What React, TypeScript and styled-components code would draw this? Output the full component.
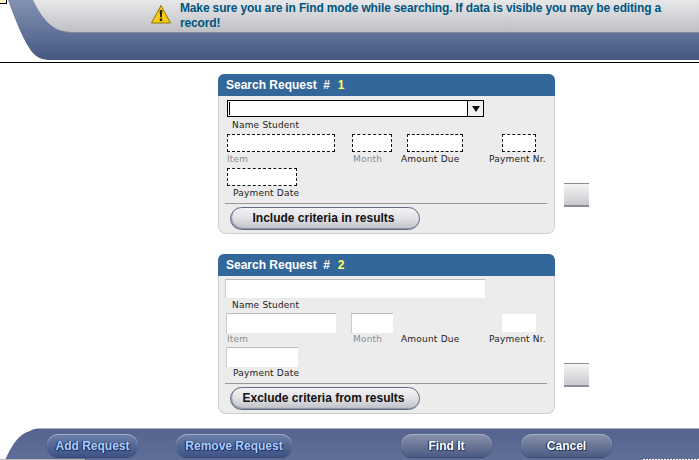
import React from "react";
import styled, { createGlobalStyle } from "styled-components";

const Global = createGlobalStyle`
  html, body { margin: 0; padding: 0; background: #fff; overflow: hidden; }
  body { width: 699px; height: 460px; font-family: "DejaVu Sans", Verdana, sans-serif; }
  * { box-sizing: border-box; }
`;
const Page = styled.div`
  position: relative; width: 699px; height: 460px; display: flex; flex-direction: column; overflow: hidden;
`;
const Header = styled.header`
  position: relative; height: 63px; border-bottom: 1px solid #000; flex: none;
`;
const Chrome = styled.svg`
  position: absolute; left: 0; top: 0; display: block;
`;
const Notice = styled.div`
  position: relative; display: flex; gap: 9px; padding: 1px 20px 0 151px; align-items: flex-start;
`;
const Warn = styled.svg`
  flex: none; margin-top: 3px;
`;
const NoticeText = styled.p`
  margin: 0; font: bold 12px/15px "Liberation Sans", sans-serif; color: #00567f; width: 490px; letter-spacing: -0.15px;
`;
const Flag = styled.div`
  position: absolute; left: 0; top: 0; width: 7px; height: 4px; background: #fff9c8;
  border: 1px solid #000; border-top: 0; border-left: 0;
`;
const Main = styled.main`
  flex: 1; padding: 11px 0 0 218px; display: flex; flex-direction: column; gap: 20px;
`;
const Row = styled.div`
  display: flex; align-items: flex-end; gap: 9px;
`;
const Card = styled.section`
  width: 337px; height: 160px; display: flex; flex-direction: column;
`;
const CardHead = styled.h2`
  margin: 0; height: 22px; background: #336699; border-radius: 6px 6px 0 0; color: #fff; padding: 3px 0 0 8px;
  font: bold 12px/16px "Liberation Sans", sans-serif; white-space: pre; flex: none;
`;
const Num = styled.span`
  color: #ffff66; margin-left: 1px;
`;
const CardBody = styled.div`
  flex: 1; background: #ececec; border: 1px solid #cfcfcf; border-top: 0; border-radius: 0 0 8px 8px;
  padding: 4px 7px 0 6px; display: flex; flex-direction: column;
`;
const SelectBox = styled.div`
  width: 257px; height: 17px; margin-left: 2px; background: #fff; border: 1px solid #000; display: flex; justify-content: flex-end;
  position: relative;
`;
const Caret = styled.i`
  position: absolute; left: 1px; top: 1px; width: 1px; height: 13px; background: #000;
`;
const Arrow = styled.div`
  width: 16px; border-left: 1px solid #000; background: #f0f0f0; display: flex; align-items: center; justify-content: center;
  &::after { content: ""; border: 4px solid transparent; border-top: 6px solid #111; border-bottom: 0; }
`;
const SelectBlank = styled.div`
  width: 260px; height: 19px; margin: -1px 0 -1px 0; background: #fff; border-top: 1px solid #bbb; border-left: 1px solid #ccc;
`;
const Label = styled.span<{ $dim?: boolean; $x?: number }>`
  display: block; font: 9px/12px "DejaVu Sans", sans-serif; letter-spacing: 0.2px; white-space: nowrap;
  color: ${(p) => (p.$dim ? "#8c8c8c" : "#222")}; margin-left: ${(p) => p.$x ?? 0}px;
`;
const NameLabel = styled(Label)`
  margin-top: 2px; margin-left: 7px;
`;
const Fields = styled.div`
  display: grid; grid-template-columns: 125px 49px 88px 1fr; margin: 3px 0 0 2px;
`;
const Field = styled.div``;
const Input = styled.div<{ $w: number; $x?: number; $open?: boolean }>`
  width: ${(p) => p.$w}px; height: ${(p) => (p.$open ? 20 : 18)}px; margin-left: ${(p) => p.$x ?? 0}px; background: #fff;
  margin-top: ${(p) => (p.$open ? -1 : 0)}px; margin-bottom: ${(p) => (p.$open ? -1 : 0)}px;
  ${(p) => (p.$open
    ? "border-top: 1px solid #bbb; border-left: 1px solid #ccc;"
    : "border: 1px dashed #111;")}
`;
const FieldLabel = styled(Label)`
  margin-top: 1px; height: 14px;
`;
const PaymentDate = styled.div`
  margin: 1px 0 0 2px;
`;
const Divider = styled.hr`
  margin: 2px 0 3px 0; border: 0; border-top: 1px solid #999; width: 322px;
`;
const Pill = styled.button`
  width: 190px; height: 23px; margin-left: 5px; border: 1px solid #5e6a80; border-radius: 12px; padding: 0 3px 0 0;
  background: linear-gradient(#f2f2f4 0%, #e4e4e8 45%, #bfc1c9 100%); box-shadow: inset 1px -1px 1px #8d93a3;
  font: bold 12px/19px "Liberation Sans", sans-serif; color: #111; text-align: center;
`;
const SideTab = styled.div`
  width: 25px; height: 24px; margin-bottom: 27px;
  background: linear-gradient(#f5f5f6, #c9cace); border-top: 1px solid #8e8e90; border-bottom: 2px solid #8b8d97;
`;
const Footer = styled.footer`
  position: relative; height: 33px; flex: none; margin-top: auto;
`;
const Actions = styled.div`
  position: relative; display: flex; padding: 7px 0 0 47px;
`;
const Action = styled.button<{ $w: number; $gap: number; $link?: boolean }>`
  width: ${(p) => p.$w}px; height: 23px; margin-right: ${(p) => p.$gap}px; padding: 0; border: 0; border-radius: 12px;
  background: ${(p) => (p.$link ? "linear-gradient(#6d80a8, #3d5285)" : "linear-gradient(#8a93aa, #4b5a84)")};
  box-shadow: 0 1px 1px #38476f, inset 0 1px 0 #a3adc3;
  color: ${(p) => (p.$link ? "#a9ccff" : "#fff")}; font: bold 12px/22px "Liberation Sans", sans-serif;
  text-shadow: 1px 1px 1px #1c2a55, -1px 0 1px #1c2a55;
`;
const BaseLine = styled.i`
  position: absolute; left: 0; bottom: 0; width: 85px; height: 1px; background: #b8b8b8;
`;
const Tick = styled.i`
  position: absolute; left: 85px; bottom: 0; width: 1px; height: 2px; background: #555;
`;
const Dots = styled.i`
  position: absolute; left: 642px; right: 0; bottom: 0; height: 1px;
  background: repeating-linear-gradient(90deg, #777 0 1px, #fff 1px 3px);
`;
const PaymentOpen = styled.div`
  width: 34px; height: 18px; margin-left: 13px; background: #fff;
`;
const AmountHidden = styled.div`
  height: 18px;
`;

function FieldRow({ open }: { open?: boolean }) {
  return (
    <>
      <Fields>
        <Field>
          <Input $w={open ? 110 : 108} $open={open} $x={open ? -1 : 0} />
          <FieldLabel $dim>Item</FieldLabel>
        </Field>
        <Field>
          <Input $w={open ? 42 : 40} $open={open} $x={open ? -1 : 0} />
          <FieldLabel $dim $x={1}>Month</FieldLabel>
        </Field>
        <Field>
          {open ? <AmountHidden /> : <Input $w={56} $x={6} />}
          <FieldLabel>Amount Due</FieldLabel>
        </Field>
        <Field>
          {open ? <PaymentOpen /> : <Input $w={34} $x={13} />}
          <FieldLabel>Payment Nr.</FieldLabel>
        </Field>
      </Fields>
      <PaymentDate>
        <Input $w={open ? 72 : 70} $open={open} $x={open ? -1 : 0} />
        <FieldLabel $x={6}>Payment Date</FieldLabel>
      </PaymentDate>
    </>
  );
}

function SearchCard({ n, action, open }: { n: number; action: string; open?: boolean }) {
  return (
    <Row>
      <Card>
        <CardHead>Search Request  #  <Num>{n}</Num></CardHead>
        <CardBody>
          {open ? <SelectBlank /> : <SelectBox><Caret /><Arrow /></SelectBox>}
          <NameLabel>Name Student</NameLabel>
          <FieldRow open={open} />
          <Divider />
          <Pill>{action}</Pill>
        </CardBody>
      </Card>
      <SideTab />
    </Row>
  );
}

export default function App() {
  return (
    <Page>
      <Global />
      <Header>
        <Chrome width="699" height="62" viewBox="0 0 699 62">
          <defs>
            <linearGradient id="blueTop" x1="0" y1="0" x2="0" y2="1">
              <stop offset="0" stopColor="#8292b0" />
              <stop offset="0.6" stopColor="#5e6f98" />
              <stop offset="1" stopColor="#46577f" />
            </linearGradient>
            <linearGradient id="greyTop" x1="0" y1="0" x2="0" y2="1">
              <stop offset="0" stopColor="#e8e8ea" />
              <stop offset="1" stopColor="#bfc0c4" />
            </linearGradient>
            <linearGradient id="blueFoot" x1="0" y1="0" x2="0" y2="1">
              <stop offset="0" stopColor="#55648e" />
              <stop offset="1" stopColor="#5f6f99" />
            </linearGradient>
          </defs>
          <path d="M8 0 C16 22 24 42 32 52 C37 58 43 60 50 60 L699 60 L699 0 Z" fill="url(#blueTop)" />
          <path d="M33 0 C42 18 52 32 70 32 L699 32 L699 0 Z" fill="url(#greyTop)" />
          <path d="M66 32.5 L699 32.5" stroke="#7f8797" strokeWidth="1" />
        </Chrome>
        <Flag />
        <Notice>
          <Warn width="20" height="20" viewBox="0 0 20 20">
            <path d="M10 1.5 L19.5 19 L0.5 19 Z" fill="#f7cc10" stroke="#8a7410" strokeWidth="1" strokeLinejoin="round" />
            <path d="M8.7 6 h2.6 l-.5 7.5 h-1.6 Z" fill="#222" />
            <rect x="8.8" y="14.6" width="2.4" height="2.4" fill="#222" />
          </Warn>
          <NoticeText>Make sure you are in Find mode while searching. If data is visible you may be editing a record!</NoticeText>
        </Notice>
      </Header>
      <Main>
        <SearchCard n={1} action="Include criteria in results" />
        <SearchCard n={2} action="Exclude criteria from results" open />
      </Main>
      <Footer>
        <Chrome width="699" height="33" viewBox="0 0 699 33">
          <path d="M5 33 C11 20 18 7 30 4 C33 2 36 1.5 42 1.5 L699 1.5 L699 33 Z" fill="url(#blueFoot)" />
        </Chrome>
        <Actions>
          <Action $w={91} $gap={38} $link>Add Request</Action>
          <Action $w={116} $gap={109} $link>Remove Request</Action>
          <Action $w={91} $gap={29}>Find It</Action>
          <Action $w={91} $gap={0}>Cancel</Action>
        </Actions>
        <BaseLine />
        <Tick />
        <Dots />
      </Footer>
    </Page>
  );
}
